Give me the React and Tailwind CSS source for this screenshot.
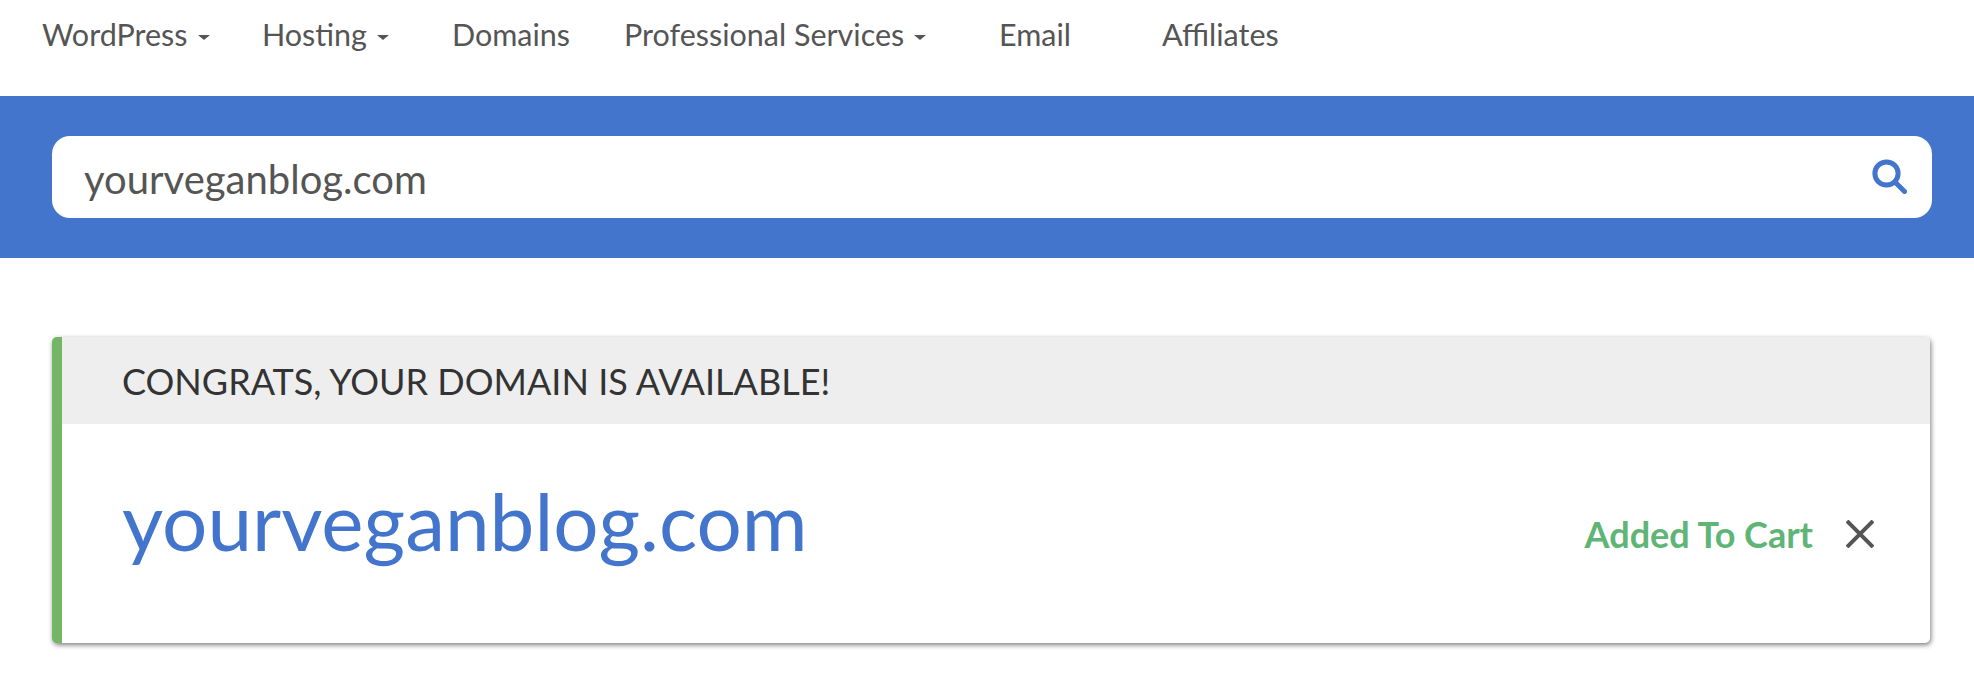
import React from "react";

function Caret() {
  return <span className="ml-[10px] mt-[5px] inline-block border-x-[6px] border-t-[5px] border-x-transparent border-t-[#555]" />;
}

function NavItem({ label, caret, className }) {
  return (
    <a className={"flex items-center whitespace-nowrap " + className}>
      {label}
      {caret && <Caret />}
    </a>
  );
}

export default function App() {
  return (
    <div className="min-h-[680px] bg-white font-['Lato',sans-serif]">
      <nav className="flex h-[96px] items-center pb-[26px] pl-[42px] text-[30.5px] text-[#555]">
        <NavItem label="WordPress" caret className="w-[220px]" />
        <NavItem label="Hosting" caret className="w-[190px]" />
        <NavItem label="Domains" className="w-[172px]" />
        <NavItem label="Professional Services" caret className="w-[375px]" />
        <NavItem label="Email" className="w-[163px]" />
        <NavItem label="Affiliates" />
      </nav>

      <div className="h-[162px] bg-[#4275cb] pl-[52px] pr-[42px] pt-[40px]">
        <div className="flex h-[82px] items-center justify-between rounded-[18px] bg-white pl-[32px] pr-[25px]">
          <span className="mt-[3px] text-[40px] text-[#555]">yourveganblog.com</span>
          <svg className="mb-[2px]" width="35" height="35" viewBox="0 0 35 35" fill="none" stroke="#4275cb" strokeWidth="5" strokeLinecap="round">
            <circle cx="14.5" cy="14.5" r="11.6" />
            <path d="M23.5 23.5 L32.5 32.5" />
          </svg>
        </div>
      </div>

      <div className="ml-[52px] mr-[44px] mt-[79px] flex h-[306px] flex-col overflow-hidden rounded-[5px] border-l-[10px] border-[#74b566] bg-white shadow-[1px_2px_5px_rgba(0,0,0,0.5)]">
        <div className="flex h-[87px] items-center bg-[#eeeeee] pl-[60px] text-[36px] text-[#333]">
          CONGRATS, YOUR DOMAIN IS AVAILABLE!
        </div>
        <div className="flex flex-1 items-center justify-between pl-[60px] pr-[56px]">
          <span className="mb-[28px] text-[80px] leading-none text-[#4275cb]">yourveganblog.com</span>
          <div className="flex items-center gap-[33px]">
            <span className="text-[36px] font-bold text-[#5eb576]">Added To Cart</span>
            <svg width="28" height="28" viewBox="0 0 28 28" fill="none" stroke="#555" strokeWidth="4">
              <path d="M1 1 L27 27 M27 1 L1 27" />
            </svg>
          </div>
        </div>
      </div>
    </div>
  );
}
